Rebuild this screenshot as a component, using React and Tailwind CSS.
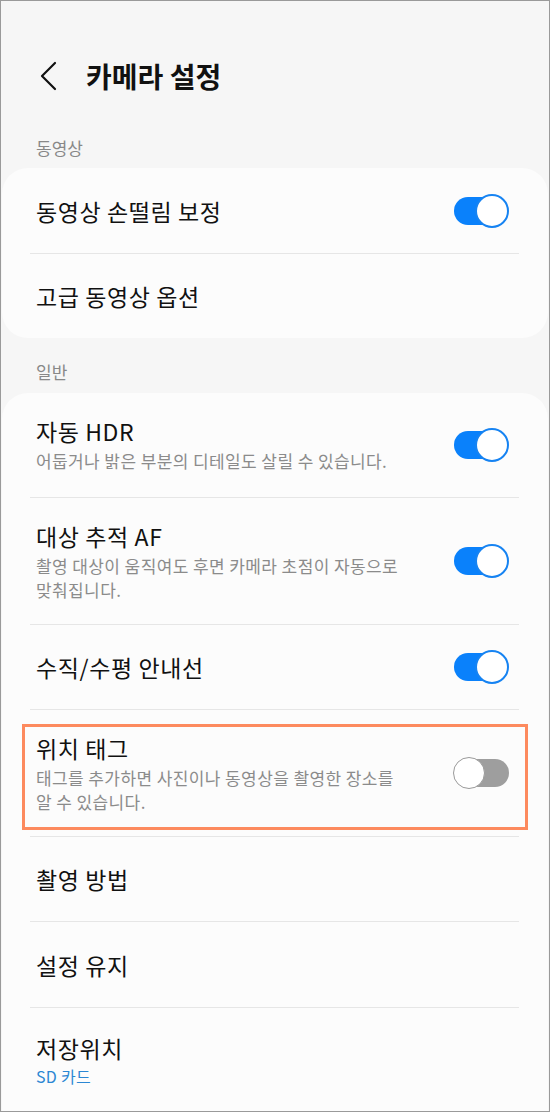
import React from "react";

const FONT = { fontFamily: '"Noto Sans CJK KR", "Noto Sans", sans-serif' };

function Toggle({ on }) {
  if (on) {
    return (
      <div className="relative w-[55px] h-[34px] shrink-0">
        <div className="absolute left-0 top-[3px] w-[48px] h-[28px] rounded-full bg-[#0a81fb]" />
        <div className="absolute right-0 top-0 w-[34px] h-[34px] rounded-full bg-white border-2 border-[#1683f2]" />
      </div>
    );
  }
  return (
    <div className="relative w-[56px] h-[32px] shrink-0">
      <div className="absolute right-0 top-[2px] w-[48px] h-[28px] rounded-full bg-[#9e9e9e]" />
      <div className="absolute left-0 top-0 w-[32px] h-[32px] rounded-full bg-white border-[1.5px] border-[#9a9a9a]" />
    </div>
  );
}

function Divider() {
  return <div className="ml-[28px] mr-[29px] h-px bg-[#e6e6e6]" />;
}

function Row({ title, toggle, h = "h-[84px]" }) {
  return (
    <div className={`${h} flex items-center pl-[34px] pr-[39px]`}>
      <div className="flex-1 text-[23px] tracking-[0.6px] text-[#111] leading-[30px]">{title}</div>
      {toggle !== undefined && <Toggle on={toggle} />}
    </div>
  );
}

function SubRow({ title, sub, toggle, h }) {
  return (
    <div className={`${h} flex items-center pl-[34px] pr-[39px]`}>
      <div className="flex-1 min-w-0 self-start pt-[23px]">
        <div className="text-[23px] tracking-[0.6px] text-[#111] leading-[30px]">{title}</div>
        <div className="mt-[3px] text-[17px] tracking-[0.4px] leading-[24px] text-[#8b8b8b] whitespace-nowrap">{sub}</div>
      </div>
      <Toggle on={toggle} />
    </div>
  );
}

export default function App() {
  return (
    <div
      className="w-[550px] h-[1112px] overflow-hidden bg-[#f6f6f6] border border-[#9a9a9a] flex flex-col"
      style={FONT}
    >
      {/* Header */}
      <div className="h-[124px] shrink-0 pt-[45px]">
        <div className="h-[60px] flex items-center">
          <svg className="ml-[38px]" width="20" height="30" viewBox="0 0 20 30" fill="none">
            <path d="M16 2 L3 15 L16 28" stroke="#111" strokeWidth="2.2" strokeLinecap="round" strokeLinejoin="round" />
          </svg>
          <div className="ml-[27px] text-[28px] font-bold text-[#111] leading-[34px]">카메라 설정</div>
        </div>
      </div>

      {/* Section 동영상 */}
      <div className="h-[43px] shrink-0 pt-[3px] pl-[35px] flex items-center text-[17px] text-[#888]">동영상</div>
      <div className="mx-px shrink-0 rounded-[26px] bg-[#fcfcfc]">
        <Row title="동영상 손떨림 보정" toggle={true} h="h-[85px]" />
        <Divider />
        <Row title="고급 동영상 옵션" />
      </div>

      {/* Section 일반 */}
      <div className="h-[55px] shrink-0 pt-[12px] pl-[35px] flex items-center text-[17px] text-[#888]">일반</div>
      <div className="mx-px rounded-t-[26px] bg-[#fcfcfc] flex-1">
        <SubRow
          title="자동 HDR"
          sub="어둡거나 밝은 부분의 디테일도 살릴 수 있습니다."
          toggle={true}
          h="h-[104px]"
        />
        <Divider />
        <SubRow
          title="대상 추적 AF"
          sub={
            <>
              촬영 대상이 움직여도 후면 카메라 초점이 자동으로
              <br />
              맞춰집니다.
            </>
          }
          toggle={true}
          h="h-[126px]"
        />
        <Divider />
        <Row title="수직/수평 안내선" toggle={true} />
        <Divider />
        <div className="relative">
          <SubRow
            title="위치 태그"
            sub={
              <>
                태그를 추가하면 사진이나 동영상을 촬영한 장소를
                <br />
                알 수 있습니다.
              </>
            }
            toggle={false}
            h="h-[126px]"
          />
          <div className="absolute left-[20px] right-[20px] top-[14px] bottom-[6px] border-[3px] border-[#fd8a5e]" />
        </div>
        <Divider />
        <Row title="촬영 방법" />
        <Divider />
        <Row title="설정 유지" h="h-[85px]" />
        <Divider />
        <div className="pl-[34px] pt-[25px]">
          <div className="text-[23px] tracking-[0.6px] text-[#111] leading-[30px]">저장위치</div>
          <div className="mt-[2px] text-[16px] tracking-[0.3px] leading-[22px] text-[#2b87d3]">SD 카드</div>
        </div>
      </div>
    </div>
  );
}
